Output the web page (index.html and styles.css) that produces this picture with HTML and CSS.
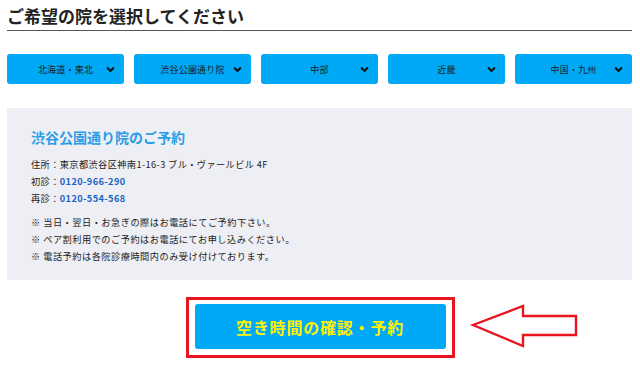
FILE: index.html
```html
<!DOCTYPE html>
<html lang="ja">
  <head>
    <meta charset="utf-8" />
    <title>院を選択</title>
    <link rel="stylesheet" href="styles.css">
  </head>
  <body>
    <div class="wrap">
      <h2 class="ttl">ご希望の院を選択してください</h2>

      <div class="areas">
        <button class="area">北海道・東北<svg class="chev" viewBox="0 0 8 6"><polyline points="1,1.2 4,4.3 7,1.2" /></svg></button>
        <button class="area">渋谷公園通り院<svg class="chev" viewBox="0 0 8 6"><polyline points="1,1.2 4,4.3 7,1.2" /></svg></button>
        <button class="area">中部<svg class="chev" viewBox="0 0 8 6"><polyline points="1,1.2 4,4.3 7,1.2" /></svg></button>
        <button class="area">近畿<svg class="chev" viewBox="0 0 8 6"><polyline points="1,1.2 4,4.3 7,1.2" /></svg></button>
        <button class="area">中国・九州<svg class="chev" viewBox="0 0 8 6"><polyline points="1,1.2 4,4.3 7,1.2" /></svg></button>
      </div>

      <div class="info">
        <h3 class="info-ttl">渋谷公園通り院のご予約</h3>
        <p class="line">住所：東京都渋谷区神南1-16-3 ブル・ヴァールビル 4F</p>
        <p class="line">初診：<span class="tel">0120-966-290</span></p>
        <p class="line">再診：<span class="tel">0120-554-568</span></p>
        <ul class="notes">
          <li>※ 当日・翌日・お急ぎの際はお電話にてご予約下さい。</li>
          <li>※ ペア割利用でのご予約はお電話にてお申し込みください。</li>
          <li>※ 電話予約は各院診療時間内のみ受け付けております。</li>
        </ul>
      </div>

      <div class="reserve">
        <div class="mark">
          <button class="btn-reserve">空き時間の確認・予約</button>
        </div>
        <svg class="arrow" width="110" height="46" viewBox="0 0 110 46">
          <polygon points="3,21 53,2 53,12 106,12 106,31 53,31 53,42" />
        </svg>
      </div>
    </div>
  </body>
</html>
```

FILE: styles.css
```css
body {
  margin: 0;
  background: #fff;
  font-family: "Noto Sans CJK JP", "Noto Sans", sans-serif;
  color: #222;
}
.wrap {
  width: 625px;
  margin-left: 7px;
}
.ttl {
  margin: 0;
  padding-top: 5px;
  height: 25px;
  font-size: 17px;
  line-height: 22px;
  font-weight: bold;
  color: #222;
  border-bottom: 1px solid #555;
}
.areas {
  display: flex;
  gap: 10px;
  margin-top: 23px;
}
.area {
  position: relative;
  width: 117px;
  height: 30px;
  padding: 0 20px;
  border: none;
  border-radius: 3px;
  background: #00a9f6;
  color: #1c1c1c;
  font-family: inherit;
  font-size: 9px;
  letter-spacing: 0.2px;
}
.chev {
  position: absolute;
  right: 9px;
  top: 12px;
  width: 9px;
  height: 7px;
}
.chev polyline {
  fill: none;
  stroke: #111;
  stroke-width: 1.8;
}
.info {
  margin-top: 24px;
  height: 172px;
  box-sizing: border-box;
  padding: 18px 24px 0;
  background: #eeeff4;
}
.info-ttl {
  margin: 0 0 8px;
  font-size: 14px;
  line-height: 22px;
  color: #2a9de8;
}
.line {
  margin: 0;
  font-size: 9.2px;
  line-height: 17px;
  letter-spacing: 0.4px;
  color: #222;
}
.tel {
  color: #1a63c6;
  font-weight: bold;
}
.notes {
  list-style: none;
  margin: 7px 0 0;
  padding: 0;
  font-size: 9.2px;
  line-height: 17px;
  letter-spacing: 0.5px;
}
.reserve {
  position: relative;
  margin-top: 17px;
  display: flex;
  justify-content: center;
}
.mark {
  border: 3px solid #e8141e;
  padding: 4px 6px 6px 6px;
  margin-left: 1px;
}
.btn-reserve {
  display: block;
  width: 251px;
  height: 45px;
  border: none;
  border-radius: 3px;
  background: #00a9f6;
  color: #fff200;
  font-family: inherit;
  font-size: 16px;
  font-weight: bold;
  letter-spacing: 0.8px;
}
.arrow {
  position: absolute;
  left: 463px;
  top: 7px;
}
.arrow polygon {
  fill: none;
  stroke: #e8141e;
  stroke-width: 2.4;
}
```
